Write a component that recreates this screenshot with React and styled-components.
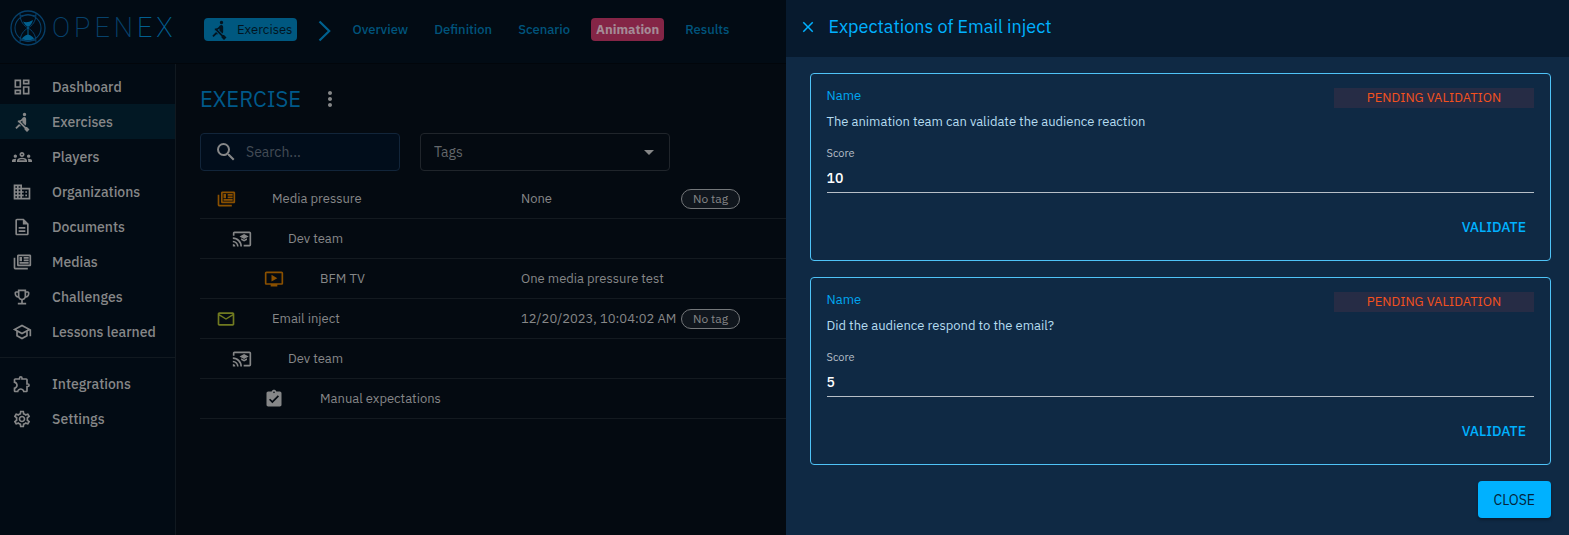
import React from "react";
import styled, { createGlobalStyle, css } from "styled-components";
import {
  MdOutlineDashboard,
  MdRowing,
  MdOutlineGroups,
  MdDomain,
  MdOutlineDescription,
  MdOutlineEmojiEvents,
  MdOutlineSchool,
  MdOutlineExtension,
  MdOutlineSettings,
  MdSearch,
  MdArrowDropDown,
  MdMoreVert,
  MdMailOutline,
  MdAssignmentTurnedIn,
  MdOutlineOndemandVideo,
  MdClose,
} from "react-icons/md";

const GlobalStyle = createGlobalStyle`
  *, *::before, *::after { box-sizing: border-box; }
  body {
    margin: 0;
    background: #040a11;
    color: #868788;
    font-family: "IBM Plex Sans", Roboto, sans-serif;
    font-size: 13px;
    line-height: 20px;
  }
  button, input, select { font: inherit; color: inherit; }
  ul { list-style: none; margin: 0; padding: 0; }
`;

const Page = styled.div`
  display: flex;
  flex-direction: column;
  min-height: 100vh;
`;

const TopBar = styled.header`
  display: flex;
  align-items: center;
  height: 64px;
  padding: 0 0 4px 10px;
  background: #020b14;
  border-bottom: 1px solid #02060b;
`;

const Brand = styled.a`
  display: flex;
  align-items: center;
  gap: 6px;
  width: 194px;
  padding-bottom: 4px;
  text-decoration: none;
`;

const BrandName = styled.span`
  font-family: Roboto, sans-serif;
  font-size: 27px;
  font-weight: 200;
  letter-spacing: 4px;
  line-height: 36px;
  color: #07426c;
`;

const BrandAccent = styled.span`
  color: #015f90;
`;

const Tabs = styled.nav`
  display: flex;
  align-items: center;
  gap: 16px;
`;

const Tab = styled.a`
  display: flex;
  align-items: center;
  height: 23px;
  padding: 0 5px;
  border-radius: 4px;
  font-weight: 500;
  text-decoration: none;
  color: #00547c;
  ${(p) =>
    p.$variant === "section" &&
    css`
      gap: 8px;
      background: #005880;
      color: #021420;
      font-weight: 400;
    `}
  ${(p) =>
    p.$variant === "current" &&
    css`
      background: #842546;
      color: #a48b96;
      font-weight: 700;
    `}
`;

const Body = styled.div`
  display: flex;
  flex: 1;
`;

const Sidebar = styled.nav`
  flex: 0 0 176px;
  padding: 5px 0;
  background: #020b14;
  border-right: 1px solid #111920;
`;

const MenuGroup = styled.ul`
  & + & {
    margin-top: 8px;
    padding-top: 8px;
    border-top: 1px solid #111920;
  }
`;

const MenuLink = styled.a`
  display: flex;
  align-items: center;
  gap: 20px;
  height: 35px;
  padding-left: 12px;
  font-size: 14px;
  font-weight: 500;
  color: #868788;
  text-decoration: none;
  background: ${(p) => (p.$active ? "#021824" : "transparent")};
`;

const Content = styled.main`
  flex: 1;
  min-width: 0;
  padding: 20px 24px;
`;

const TitleRow = styled.div`
  display: flex;
  align-items: center;
  gap: 17px;
  height: 30px;
`;

const Title = styled.h1`
  margin: 0;
  font-size: 22px;
  font-weight: 400;
  line-height: 30px;
  color: #00598a;
`;

const IconButton = styled.button`
  display: flex;
  padding: 0;
  border: 0;
  background: none;
  cursor: pointer;
`;

const Filters = styled.div`
  display: flex;
  gap: 20px;
  margin-top: 19px;
`;

const SearchBox = styled.label`
  display: flex;
  align-items: center;
  gap: 8px;
  width: 200px;
  height: 38px;
  padding: 0 13px;
  border: 1px solid #12253a;
  border-radius: 4px;
  background: #010d1b;
  & > svg {
    flex-shrink: 0;
  }
`;

const SearchInput = styled.input`
  width: 100%;
  min-width: 0;
  padding: 0;
  border: 0;
  outline: 0;
  background: none;
  font-size: 14px;
  &::placeholder {
    color: #434b55;
    opacity: 1;
  }
`;

const TagBox = styled.div`
  display: grid;
  align-items: center;
  width: 250px;
  height: 38px;
  border: 1px solid #20252b;
  border-radius: 4px;
  & > * {
    grid-area: 1 / 1;
  }
  & > svg {
    justify-self: end;
    margin-right: 8px;
    pointer-events: none;
  }
`;

const TagSelect = styled.select`
  appearance: none;
  height: 36px;
  padding: 0 13px;
  border: 0;
  outline: 0;
  background: none;
  font-size: 14px;
  color: #63676b;
`;

const InjectList = styled.ul`
  margin-top: 8px;
`;

const InjectRow = styled.li`
  display: grid;
  grid-template-columns: 321px 160px 1fr;
  align-items: center;
  height: 40px;
  border-bottom: 1px solid #141a20;
`;

const levelIndent = { 0: 16, 1: 32, 2: 64 };

const InjectName = styled.div`
  display: flex;
  align-items: center;
  gap: 36px;
  padding-left: ${(p) => levelIndent[p.$level]}px;
`;

const Cell = styled.span`
  white-space: nowrap;
`;

const Chip = styled.span`
  justify-self: start;
  padding: 0 11px;
  border: 1px solid #74777a;
  border-radius: 10px;
  background: #10161d;
  font-size: 12px;
  line-height: 18px;
`;

const Drawer = styled.aside`
  position: fixed;
  top: 0;
  right: 0;
  bottom: 0;
  width: calc(50% - 1px);
  overflow: auto;
  background: #0f2944;
`;

const DrawerHeader = styled.header`
  display: flex;
  align-items: center;
  gap: 12px;
  height: 57px;
  padding: 0 0 3px 13px;
  background: #071a2e;
  color: #00b1ff;
`;

const DrawerTitle = styled.h2`
  margin: 0;
  font-size: 18px;
  font-weight: 400;
  line-height: 24px;
`;

const DrawerForm = styled.form`
  display: flex;
  flex-direction: column;
  gap: 16px;
  padding: 16px 18px 16px 24px;
`;

const Card = styled.section`
  padding: 12px 16px 15px;
  border: 1px solid #4fc3f7;
  border-radius: 4px;
`;

const CardHead = styled.div`
  display: flex;
  justify-content: space-between;
`;

const CardLabel = styled.h3`
  margin: 0;
  font-size: 13px;
  font-weight: 400;
  line-height: 20px;
  color: #00a6f0;
`;

const Status = styled.span`
  width: 200px;
  height: 20px;
  margin-top: 2px;
  background: #262c45;
  color: #f4511e;
  text-align: center;
  text-transform: uppercase;
`;

const Description = styled.p`
  margin: 4px 0 13px;
  color: #b5dcf0;
`;

const ScoreLabel = styled.label`
  display: block;
  font-size: 11px;
  line-height: 16px;
  color: #b7bfc7;
`;

const ScoreInput = styled.input`
  display: block;
  width: 100%;
  height: 32px;
  padding: 2px 0 0;
  border: 0;
  border-bottom: 1px solid #b7bfc7;
  outline: 0;
  background: none;
  color: #fff;
  font-size: 14px;
  font-weight: 500;
`;

const CardActions = styled.div`
  display: flex;
  justify-content: flex-end;
  margin-top: 16px;
`;

const TextButton = styled.button`
  height: 36px;
  padding: 0 8px;
  border: 0;
  border-radius: 4px;
  background: none;
  color: #00b1ff;
  font-size: 14px;
  font-weight: 500;
  text-transform: uppercase;
  cursor: pointer;
`;

const PrimaryButton = styled(TextButton)`
  align-self: flex-end;
  height: 37px;
  padding: 0 16px;
  background: #00b1ff;
  color: #04243a;
  font-weight: 400;
  box-shadow: 0 2px 3px rgba(0, 0, 0, 0.3);
`;

const Glyph = ({ d, size = 20, color = "currentColor" }) => (
  <svg width={size} height={size} viewBox="0 0 24 24" fill={color} aria-hidden="true">
    <path d={d} />
  </svg>
);

const newspaperPath =
  "M4 7V19H19V21H4C2 21 2 19 2 19V7H4M21 5V15H8V5H21M21.3 3H7.7C6.76 3 6 3.7 6 4.55V15.45C6 16.31 6.76 17 7.7 17H21.3C22.24 17 23 16.31 23 15.45V4.55C23 3.7 22.24 3 21.3 3M9 6H12V11H9V6M20 14H9V12H20V14M20 8H14V6H20V8M20 11H14V9H20V11Z";
const castEducationPath =
  "M21,3H3C1.89,3 1,3.89 1,5V8H3V5H21V19H14V21H21A2,2 0 0,0 23,19V5C23,3.89 22.1,3 21,3M1,10V12A9,9 0 0,1 10,21H12C12,14.92 7.08,10 1,10M1,14V16A5,5 0 0,1 6,21H8A7,7 0 0,0 1,14M1,18V21H4A3,3 0 0,0 1,18M11,11.09V13.09L14.5,15L18,13.09V11.09L14.5,13L11,11.09M14.5,6L9,9L14.5,12L20,9L14.5,6Z";

const NewsIcon = (props) => <Glyph d={newspaperPath} {...props} />;
const TeamIcon = (props) => <Glyph d={castEducationPath} {...props} />;

const HourglassLogo = () => (
  <svg width="36" height="36" viewBox="0 0 36 36" fill="none" stroke="#07406a" aria-hidden="true">
    <circle cx="18" cy="18" r="17" strokeWidth="1.3" />
    <circle cx="18" cy="18" r="13" strokeWidth="1.1" />
    <path d="M10 3.500C10 12 14 15.500 18 18C22 15.500 26 12 26 3.500M10 32.500C10 24 14 20.500 18 18C22 20.500 26 24 26 32.500" />
    <path d="M10 6Q18 3 26 6M10 30Q18 33 26 30" />
    <path d="M13 11.500Q17 13.500 23 10Q22 14.500 18 17Q14.500 15 13 11.500Z" fill="#01608f" stroke="none" />
    <path d="M18 17V26" stroke="#01608f" />
    <path d="M12 29Q13 26 18 24.500Q23 26 24 29Q18 31.500 12 29Z" fill="#01608f" stroke="none" />
  </svg>
);

const mainMenu = [
  ["Dashboard", MdOutlineDashboard],
  ["Exercises", MdRowing],
  ["Players", MdOutlineGroups],
  ["Organizations", MdDomain],
  ["Documents", MdOutlineDescription],
  ["Medias", NewsIcon],
  ["Challenges", MdOutlineEmojiEvents],
  ["Lessons learned", MdOutlineSchool],
];
const adminMenu = [
  ["Integrations", MdOutlineExtension],
  ["Settings", MdOutlineSettings],
];

const injects = [
  { level: 0, icon: NewsIcon, color: "#8a5000", name: "Media pressure", detail: "None", tag: "No tag" },
  { level: 1, icon: TeamIcon, name: "Dev team" },
  { level: 2, icon: MdOutlineOndemandVideo, color: "#8a5000", name: "BFM TV", detail: "One media pressure test" },
  { level: 0, icon: MdMailOutline, color: "#707a20", name: "Email inject", detail: "12/20/2023, 10:04:02 AM", tag: "No tag" },
  { level: 1, icon: TeamIcon, name: "Dev team" },
  { level: 2, icon: MdAssignmentTurnedIn, name: "Manual expectations" },
];

const expectations = [
  { id: "reaction", text: "The animation team can validate the audience reaction", score: "10" },
  { id: "response", text: "Did the audience respond to the email?", score: "5" },
];

const Menu = ({ items }) => (
  <MenuGroup>
    {items.map(([label, Icon]) => (
      <li key={label}>
        <MenuLink href="#" $active={label === "Exercises"}>
          <Icon size={20} />
          {label}
        </MenuLink>
      </li>
    ))}
  </MenuGroup>
);

const ExpectationCard = ({ id, text, score }) => (
  <Card>
    <CardHead>
      <CardLabel>Name</CardLabel>
      <Status>Pending validation</Status>
    </CardHead>
    <Description>{text}</Description>
    <ScoreLabel htmlFor={id}>Score</ScoreLabel>
    <ScoreInput id={id} defaultValue={score} inputMode="numeric" />
    <CardActions>
      <TextButton type="button">Validate</TextButton>
    </CardActions>
  </Card>
);

export default function App() {
  return (
    <>
      <GlobalStyle />
      <Page>
        <TopBar>
          <Brand href="#">
            <HourglassLogo />
            <BrandName>
              OPEN<BrandAccent>EX</BrandAccent>
            </BrandName>
          </Brand>
          <Tabs>
            <Tab href="#" $variant="section">
              <MdRowing size={20} />
              Exercises
            </Tab>
            <svg width="18" height="24" viewBox="0 0 18 24" fill="none" stroke="#00618f" strokeWidth="2.2" aria-hidden="true">
              <path d="M6.500 3.500L16.200 13L6.500 22.500" />
            </svg>
            <Tab href="#">Overview</Tab>
            <Tab href="#">Definition</Tab>
            <Tab href="#">Scenario</Tab>
            <Tab href="#" $variant="current">Animation</Tab>
            <Tab href="#">Results</Tab>
          </Tabs>
        </TopBar>
        <Body>
          <Sidebar>
            <Menu items={mainMenu} />
            <Menu items={adminMenu} />
          </Sidebar>
          <Content>
            <TitleRow>
              <Title>EXERCISE</Title>
              <IconButton type="button" aria-label="More actions">
                <MdMoreVert size={24} />
              </IconButton>
            </TitleRow>
            <Filters>
              <SearchBox>
                <MdSearch size={24} />
                <SearchInput type="text" placeholder="Search..." aria-label="Search" />
              </SearchBox>
              <TagBox>
                <TagSelect aria-label="Tags" defaultValue="">
                  <option value="">Tags</option>
                </TagSelect>
                <MdArrowDropDown size={24} />
              </TagBox>
            </Filters>
            <InjectList>
              {injects.map(({ level, icon: Icon, color, name, detail, tag }, i) => (
                <InjectRow key={i}>
                  <InjectName $level={level}>
                    <Icon size={20} color={color} />
                    {name}
                  </InjectName>
                  <Cell>{detail}</Cell>
                  {tag && <Chip>{tag}</Chip>}
                </InjectRow>
              ))}
            </InjectList>
          </Content>
        </Body>
      </Page>
      <Drawer role="dialog" aria-labelledby="drawer-title">
        <DrawerHeader>
          <IconButton type="button" aria-label="Close panel">
            <MdClose size={18} />
          </IconButton>
          <DrawerTitle id="drawer-title">Expectations of Email inject</DrawerTitle>
        </DrawerHeader>
        <DrawerForm>
          {expectations.map((item) => (
            <ExpectationCard key={item.id} {...item} />
          ))}
          <PrimaryButton type="button">Close</PrimaryButton>
        </DrawerForm>
      </Drawer>
    </>
  );
}
